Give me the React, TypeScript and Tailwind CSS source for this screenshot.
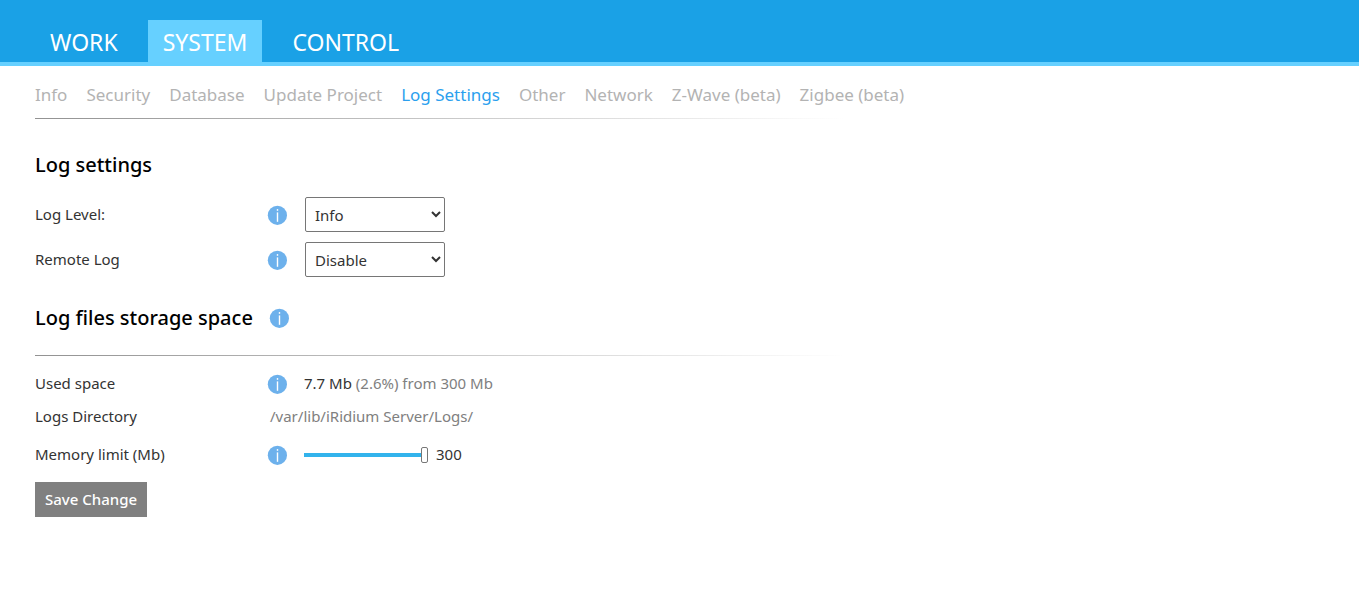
import React, { useState } from 'react';

const tabs = ['WORK', 'SYSTEM', 'CONTROL'];

const pages = [
  'Info',
  'Security',
  'Database',
  'Update Project',
  'Log Settings',
  'Other',
  'Network',
  'Z-Wave (beta)',
  'Zigbee (beta)'
];

const InfoIcon: React.FC = () => (
  <svg className="w-5 h-5 shrink-0" viewBox="0 0 20 20" aria-hidden="true">
    <circle cx="10.4" cy="10.3" r="9.6" fill="#6db1ec" />
    <rect x="9.8" y="4.1" width="1.4" height="1.7" fill="#fff" />
    <rect x="9.8" y="7.4" width="1.4" height="9.4" fill="#fff" />
  </svg>
);

const Divider: React.FC = () => (
  <div className="h-px max-w-[810px] bg-linear-to-r from-[#929292] to-white" />
);

const App: React.FC = () => {
  const [level, setLevel] = useState('Info');
  const [remote, setRemote] = useState('Disable');
  const [limit, setLimit] = useState(300);

  return (
    <div className="min-h-screen bg-white font-['Noto_Sans',sans-serif] text-[15px] leading-5 text-[#333]">
      <header className="bg-[#1aa1e6] border-b-4 border-[#66d0ff] pt-5 pl-[35px]">
        <nav className="flex gap-[15px]">
          {tabs.map(tab => (
            <a
              key={tab}
              href="#"
              className={`h-[42px] px-[15px] text-[23px] leading-[44px] text-white ${
                tab === 'SYSTEM' ? 'bg-[#66d0ff]' : ''
              }`}
            >
              {tab}
            </a>
          ))}
        </nav>
      </header>

      <main className="px-[35px]">
        <nav className="flex gap-[19px] pt-[17px] pb-[11px] text-[17px] leading-6 whitespace-nowrap">
          {pages.map(page => (
            <a
              key={page}
              href="#"
              className={page === 'Log Settings' ? 'text-[#2b9fee]' : 'text-[#b3b3b3]'}
            >
              {page}
            </a>
          ))}
        </nav>
        <Divider />

        <h2 className="mt-8 text-xl leading-7 font-medium text-black">Log settings</h2>

        {/* Level and remote log */}
        <div className="mt-[18px] flex flex-col gap-[10px]">
          <div className="flex items-center">
            <label htmlFor="level" className="w-[232px] pb-0.5">Log Level:</label>
            <InfoIcon />
            <select
              id="level"
              value={level}
              onChange={e => setLevel(e.target.value)}
              className="ml-[18px] w-[140px] h-[35px] pl-[5px] pr-0.5 border border-[#767676] rounded-xs bg-white"
            >
              <option>Info</option>
              <option>Debug</option>
              <option>Error</option>
            </select>
          </div>
          <div className="flex items-center">
            <label htmlFor="remote" className="w-[232px] pb-0.5">Remote Log</label>
            <InfoIcon />
            <select
              id="remote"
              value={remote}
              onChange={e => setRemote(e.target.value)}
              className="ml-[18px] w-[140px] h-[35px] pl-[5px] pr-0.5 border border-[#767676] rounded-xs bg-white"
            >
              <option>Disable</option>
              <option>Enable</option>
            </select>
          </div>
        </div>

        <div className="mt-[27px] mb-[23px] flex items-center gap-4">
          <h2 className="text-xl leading-7 font-medium text-black">Log files storage space</h2>
          <InfoIcon />
        </div>
        <Divider />

        {/* Storage */}
        <div className="mt-[17px] flex items-center">
          <span className="w-[232px] pb-0.5">Used space</span>
          <InfoIcon />
          <span className="ml-[17px] pb-0.5 text-[#808080]">
            <span className="text-[#333]">7.7 Mb</span> (2.6%) from 300 Mb
          </span>
        </div>
        <div className="mt-[11px] flex items-center">
          <span className="w-[235px] pb-0.5">Logs Directory</span>
          <span className="pb-0.5 text-[#808080]">/var/lib/iRidium Server/Logs/</span>
        </div>
        <div className="mt-4 flex items-center">
          <label htmlFor="limit" className="w-[232px] pb-0.5">Memory limit (Mb)</label>
          <InfoIcon />
          <input
            id="limit"
            type="range"
            min={1}
            max={300}
            value={limit}
            onChange={e => setLimit(Number(e.target.value))}
            className="ml-[17px] w-[124px] h-4 appearance-none bg-[linear-gradient(#32b3ec,#32b3ec)] bg-[length:100%_4px] bg-center bg-no-repeat [&::-webkit-slider-thumb]:appearance-none [&::-webkit-slider-thumb]:w-[7px] [&::-webkit-slider-thumb]:h-4 [&::-webkit-slider-thumb]:rounded-xs [&::-webkit-slider-thumb]:border [&::-webkit-slider-thumb]:border-[#777] [&::-webkit-slider-thumb]:bg-white"
          />
          <output htmlFor="limit" className="ml-2 pb-0.5">{limit}</output>
        </div>

        <button className="mt-4 h-[35px] px-[10px] pb-0.5 bg-[#808080] font-medium text-white">
          Save Change
        </button>
      </main>
    </div>
  );
};

export default App;
